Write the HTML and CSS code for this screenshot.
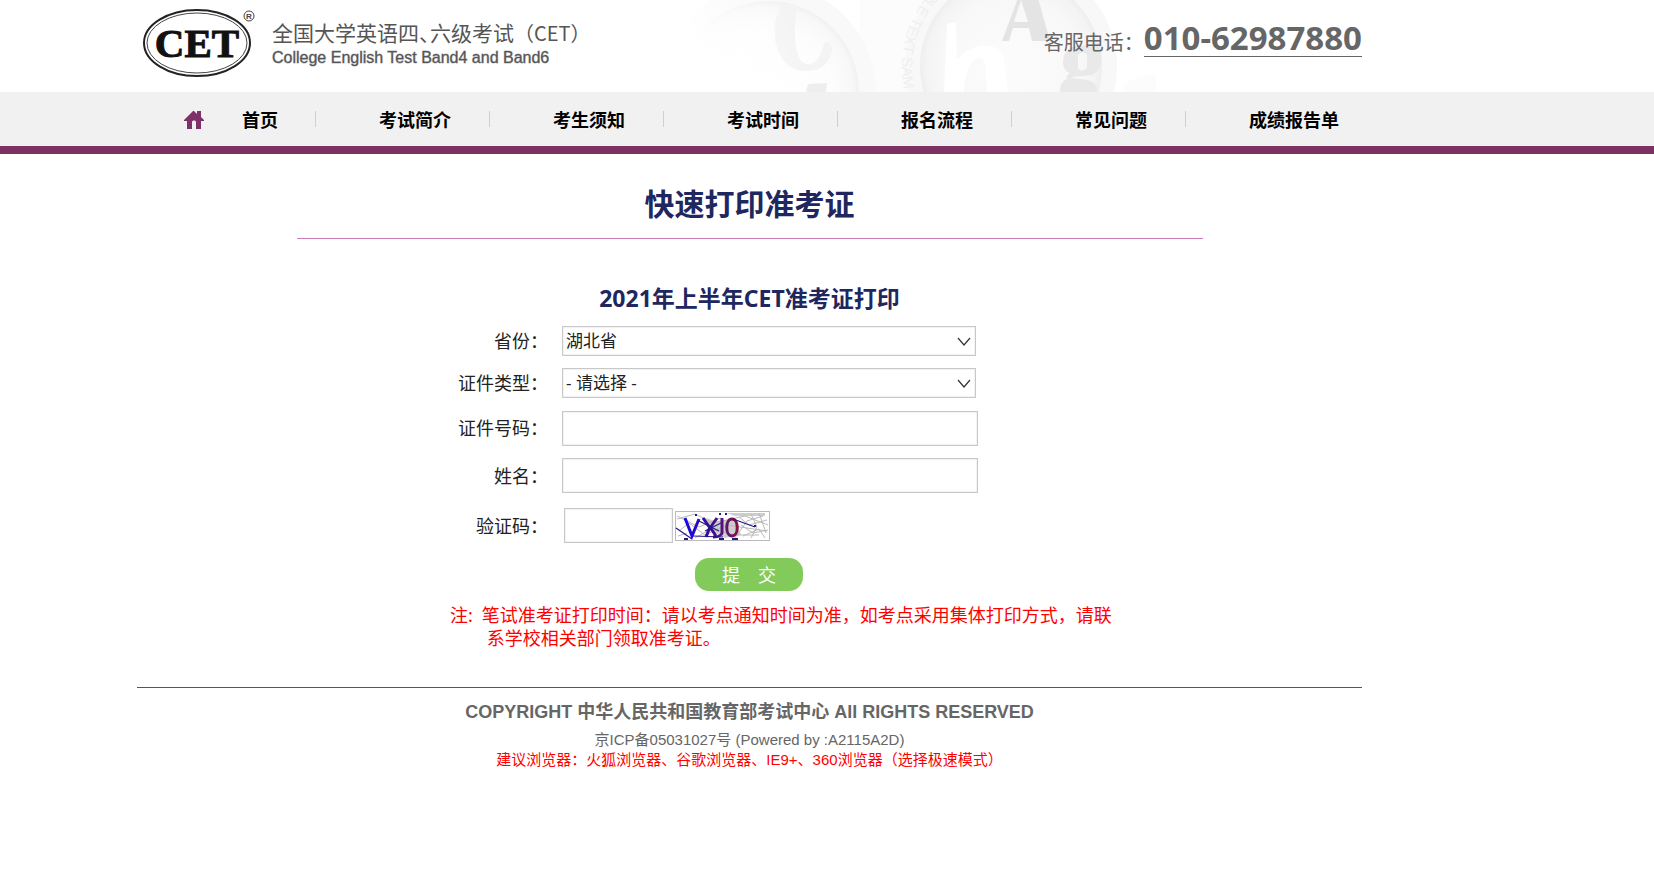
FILE: index.html
```html
<!DOCTYPE html>
<html lang="zh-CN">
<head>
<meta charset="utf-8">
<title>快速打印准考证</title>
<link rel="stylesheet" href="styles.css">
</head>
<body>
<header class="header">
  <div class="wrap header-inner">
    <svg class="header-art" width="470" height="92" viewBox="690 0 470 92" aria-hidden="true">
      <defs>
        <radialGradient id="dialLeft" gradientUnits="userSpaceOnUse" cx="768" cy="92" r="92">
          <stop offset="0" stop-color="#ffffff"/>
          <stop offset="0.7" stop-color="#fdfdfd"/>
          <stop offset="0.92" stop-color="#f8f8f8"/>
          <stop offset="1" stop-color="#f0f0f0"/>
        </radialGradient>
        <radialGradient id="dialRight" gradientUnits="userSpaceOnUse" cx="1011" cy="66" r="91">
          <stop offset="0" stop-color="#fcfcfc"/>
          <stop offset="0.75" stop-color="#f8f8f8"/>
          <stop offset="0.93" stop-color="#f4f4f4"/>
          <stop offset="1" stop-color="#eeeeee"/>
        </radialGradient>
        <linearGradient id="fade" gradientUnits="userSpaceOnUse" x1="700" y1="60" x2="790" y2="20">
          <stop offset="0" stop-color="#ffffff"/>
          <stop offset="1" stop-color="#ffffff" stop-opacity="0"/>
        </linearGradient>
        <path id="arc" d="M950 -24 A109 109 0 0 0 906 96"/>
      </defs>
      <rect x="860" width="180" height="92" fill="#fcfcfc"/>
      <circle cx="768" cy="92" r="108" fill="#f9f9f9"/>
      <circle cx="768" cy="92" r="91" fill="url(#dialLeft)"/>
      <path d="M782 5 C770 22 772 56 792 68 C808 75 830 70 832 50 C832 42 826 40 823 46 C820 64 806 70 799 58 C793 42 794 20 798 5 Z" fill="#f4f4f4"/>
      <path d="M808 84 L827 83 L826 92 L806 92 Z" fill="#eeeeee"/>
      <rect x="690" width="110" height="92" fill="url(#fade)"/>
      <circle cx="1011" cy="66" r="106" fill="#f8f8f8"/>
      <circle cx="1011" cy="66" r="91" fill="url(#dialRight)"/>
      <text class="art-ring"><textPath href="#arc">AMPLE TEXT SAM</textPath></text>
      <path d="M944 92 L947 24 L956 22 L957 60 C972 42 998 40 1004 58 L1008 92 L987 92 L985 62 C978 52 966 60 964 92 Z" fill="#ffffff"/>
      <path fill-rule="evenodd" d="M1002 41 L1018 -2 L1038 -2 L1050 41 L1032 41 L1029 28 L1013 28 L1009 41 Z M1014 22 L1028 22 L1021 0 Z" fill="#e4e4e4"/>
      <path fill-rule="evenodd" d="M1063 62 C1063 50 1074 43 1086 46 L1100 46 C1103 60 1102 70 1092 75 L1072 77 C1074 81 1098 75 1097 92 L1060 92 C1060 85 1062 81 1067 79 C1066 76 1068 74 1070 73 C1065 71 1063 67 1063 62 Z M1078 56 L1078 68 C1081 72 1085 71 1087 67 L1087 55 C1084 51 1080 52 1078 56 Z" fill="#e9e9e9"/>
      <path d="M1124 84 L1140 76 L1156 73 L1156 92 L1124 92 Z" fill="#fcfcfc"/>
    </svg>
    <a class="brand" href="#">
      <svg class="brand-mark" width="122" height="74" viewBox="0 0 122 74" role="img" aria-label="CET">
        <ellipse cx="60" cy="37" rx="53" ry="33" fill="#fff" stroke="#222" stroke-width="2"/>
        <ellipse cx="60" cy="37" rx="50" ry="30" fill="none" stroke="#444" stroke-width="1"/>
        <text x="60" y="51" text-anchor="middle" class="mark-text">CET</text>
        <circle cx="112" cy="10" r="5" fill="none" stroke="#444" stroke-width="1"/>
        <text x="112" y="13" text-anchor="middle" class="mark-reg">R</text>
      </svg>
      <span class="brand-text">
        <span class="brand-zh">全国大学英语四<span class="tight">、</span>六级考试<span class="cet">（CET）</span></span>
        <span class="brand-en">College English Test Band4 and Band6</span>
      </span>
    </a>
    <p class="hotline"><span>客服电话：</span><strong>010-62987880</strong></p>
  </div>
</header>
<nav class="nav">
  <ul class="wrap nav-list">
    <li class="nav-home"><a href="#"><svg width="20" height="18" viewBox="0 0 20 18" aria-hidden="true"><path d="M10 0 L13 3 V0 H17 V6 L20 9 V10 H17 V18 H12 V11 C12 9 8 9 8 11 V18 H3 V10 H0 V9 L9 0 Z" fill="#7e3068"/></svg><span>首页</span></a></li>
    <li><a href="#">考试简介</a></li>
    <li><a href="#">考生须知</a></li>
    <li><a href="#">考试时间</a></li>
    <li><a href="#">报名流程</a></li>
    <li><a href="#">常见问题</a></li>
    <li><a href="#">成绩报告单</a></li>
  </ul>
</nav>
<main class="wrap main">
  <h1 class="title">快速打印准考证</h1>
  <h2 class="subtitle">2021年上半年CET准考证打印</h2>
  <form class="form">
    <label for="province">省份：</label>
    <div class="select-box">
      <select id="province"><option>湖北省</option></select>
      <svg class="chevron" width="14" height="9" viewBox="0 0 14 9" aria-hidden="true"><path d="M1 1 L7 8 L13 1" fill="none" stroke="#333" stroke-width="1.2"/></svg>
    </div>
    <label for="idtype">证件类型：</label>
    <div class="select-box">
      <select id="idtype"><option>- 请选择 -</option></select>
      <svg class="chevron" width="14" height="9" viewBox="0 0 14 9" aria-hidden="true"><path d="M1 1 L7 8 L13 1" fill="none" stroke="#333" stroke-width="1.2"/></svg>
    </div>
    <label for="idno">证件号码：</label>
    <input class="field" id="idno" type="text">
    <label for="name">姓名：</label>
    <input class="field" id="name" type="text">
    <label class="code-label" for="code">验证码：</label>
    <div class="code-row">
      <input class="field" id="code" type="text">
      <svg width="95" height="30" viewBox="0 0 95 30" role="img" aria-label="验证码">
        <defs>
          <linearGradient id="ink" gradientUnits="userSpaceOnUse" x1="8" y1="0" x2="64" y2="0">
            <stop offset="0" stop-color="#1408f0"/>
            <stop offset="0.45" stop-color="#3a0a9c"/>
            <stop offset="0.75" stop-color="#5a1478"/>
            <stop offset="1" stop-color="#8c1038"/>
          </linearGradient>
        </defs>
        <rect x="0.5" y="0.5" width="94" height="29" fill="#fff" stroke="#bdb8bd"/>
        <path d="M52 2 H90 V5 H60 Z M28 6 L40 10 L60 8 L66 24 L50 27 L36 20 Z" fill="#cdcdcd"/>
        <path d="M2 8 L20 3 L38 12 L70 5 L93 14 M4 20 L14 12 L30 24 L52 14 L92 20 M60 27 L72 10 L88 5 M66 14 L78 22 L93 19 M76 3 L82 16 L76 27 M2 5 L24 16 L46 7 M64 6 L74 14 L92 9 M68 25 L84 18 L90 27 M20 27 L36 18 L60 24 L84 24 M84 2 L91 22 M3 25 L12 22" fill="none" stroke="#b9b9b9" stroke-width="1"/>
        <g fill="none" stroke="url(#ink)" stroke-width="3">
          <path d="M10 7 L17 25 L24 8"/>
          <path d="M28 7 L35 17 L42 7 M35 16 L31 26 M35 16 L41 25"/>
          <path d="M47 7 V22 Q46 26 38 26"/>
          <path d="M57 8 C50 8 50 25 57 25 C64 25 64 8 57 8"/>
        </g>
        <path d="M1 17 L17 28 M18 25 L48 26 M24 10 L44 20 M30 20 L46 12 M58 8 L80 16" fill="none" stroke="#22188c" stroke-width="1.2"/>
        <path d="M9 28 H13 M44 28 H49 M57 28 H63 M20 4 H22 M44 3 H46 M50 3 H52 M79 15 H81" stroke="#1c1c80" stroke-width="2"/>
      </svg>
    </div>
    <button class="submit" type="submit"><span>提</span><span>交</span></button>
  </form>
  <div class="note">
    <span>注:</span>
    <p>笔试准考证打印时间：请以考点通知时间为准，如考点采用集体打印方式，请联<br>系学校相关部门领取准考证。</p>
  </div>
</main>
<footer class="wrap footer">
  <p class="copyright">COPYRIGHT 中华人民共和国教育部考试中心 All RIGHTS RESERVED</p>
  <p>京ICP备05031027号 (Powered by :A2115A2D)</p>
  <p class="browsers">建议浏览器：火狐浏览器、谷歌浏览器、IE9+、360浏览器（选择极速模式）</p>
</footer>
</body>
</html>
```
FILE: styles.css
```css
* { box-sizing: border-box; }

body {
  margin: 0;
  background: #fff;
  color: #222;
  font: 18px/24px "Noto Sans", "Noto Sans CJK SC", sans-serif;
}

p, h1, h2, ul { margin: 0; padding: 0; }
a { color: inherit; text-decoration: none; }

.wrap {
  max-width: 1225px;
  margin: 0 0 0 137px;
}

/* Header */
.header-inner {
  position: relative;
  display: flex;
  justify-content: space-between;
  align-items: flex-start;
  min-height: 92px;
}
.header-art { position: absolute; left: 553px; top: 0; z-index: -1; }
.art-ring { font: 15px "Liberation Sans", sans-serif; fill: #efefef; }

.brand { display: flex; gap: 13px; padding-top: 6px; color: #555; }
.mark-text { font: bold 41px "Liberation Serif", serif; fill: #111; stroke: #111; stroke-width: 1px; }
.mark-reg { font: bold 8px "Liberation Sans", sans-serif; fill: #444; }
.brand-text { display: flex; flex-direction: column; padding-top: 13px; }
.brand-zh { font-size: 21px; line-height: 27px; white-space: nowrap; }
.tight { margin-right: -10px; }
.cet { font-family: "Noto Sans CJK SC", sans-serif; font-size: 20px; }
.brand-en { font: 16px/22px "Liberation Sans", sans-serif; -webkit-text-stroke: 1px rgba(85, 85, 85, 0.4); }

.hotline { display: flex; align-items: baseline; padding-top: 19px; color: #666; }
.hotline span { font-size: 20px; }
.hotline strong { font-size: 33px; line-height: 37px; border-bottom: 1px solid #666; }

/* Navigation */
.nav { background: #f1f1f1; border-bottom: 8px solid #7e3163; }
.nav-list { display: flex; list-style: none; }
.nav-list li {
  display: flex;
  align-items: center;
  flex: 0 1 174px;
  height: 54px;
  white-space: nowrap;
  font-weight: bold;
  color: #000;
}
.nav-list a { padding-top: 2px; }
.nav-list li::before { content: ""; width: 1px; height: 16px; margin-right: 63px; background: #cdd0da; }
.nav-list .nav-home { flex-basis: 178px; padding-left: 47px; }
.nav-list .nav-home::before { content: none; }
.nav-home a { display: flex; align-items: center; gap: 38px; }

/* Main */
.main { padding-top: 29px; }
.title {
  max-width: 906px;
  margin: 0 auto;
  padding-bottom: 14px;
  border-bottom: 1px solid #cd7bb8;
  color: #20275f;
  font-size: 30px;
  line-height: 41px;
  text-align: center;
}
.subtitle {
  padding: 44px 0 12px;
  color: #20275f;
  font-size: 23px;
  line-height: 31px;
  text-align: center;
}
.form {
  display: grid;
  grid-template-columns: 411px 416px;
  gap: 12px 14px;
  align-items: center;
}
.form label { text-align: right; }
.form select, .field {
  width: 100%;
  border: 1px solid #c8c8c8;
  border-radius: 0;
  background: #fff;
  color: #222;
  font: 17px "Noto Sans", "Noto Sans CJK SC", sans-serif;
  box-shadow: inset 0 0 1px 1px #f2f2f2;
}
.select-box { position: relative; width: 414px; }
.form select { display: block; height: 30px; padding: 0 3px; appearance: none; line-height: 26px; }
.chevron { position: absolute; right: 5px; top: 11px; pointer-events: none; }
.field { height: 35px; padding: 0 6px; }
#idno { margin-top: 1px; }
.code-label, .code-row { margin-top: 3px; }
.code-row { display: flex; align-items: center; gap: 2px; padding-left: 2px; }
.code-row .field { width: 109px; }
.submit {
  grid-column: 1 / -1;
  display: flex;
  justify-content: center;
  gap: 18px;
  width: 108px;
  height: 33px;
  margin: 3px 0 0 558px;
  padding: 0;
  border: 0;
  border-radius: 14px;
  background: #82cb5b;
  color: #fff;
  font: 18px/33px "Noto Sans CJK SC", sans-serif;
}
.note {
  display: flex;
  gap: 9px;
  padding: 13px 0 37px 313px;
  color: #f00;
  line-height: 23px;
}
.note p { padding-left: 5px; text-indent: -5px; }

/* Footer */
.footer {
  border-top: 1px solid #555;
  padding-top: 12px;
  color: #666;
  font: 15px/20px "Liberation Sans", "Noto Sans CJK SC", sans-serif;
  text-align: center;
}
.copyright { margin-bottom: 6px; font-size: 18px; line-height: 24px; font-weight: bold; }
.browsers { color: #f00; }
```
